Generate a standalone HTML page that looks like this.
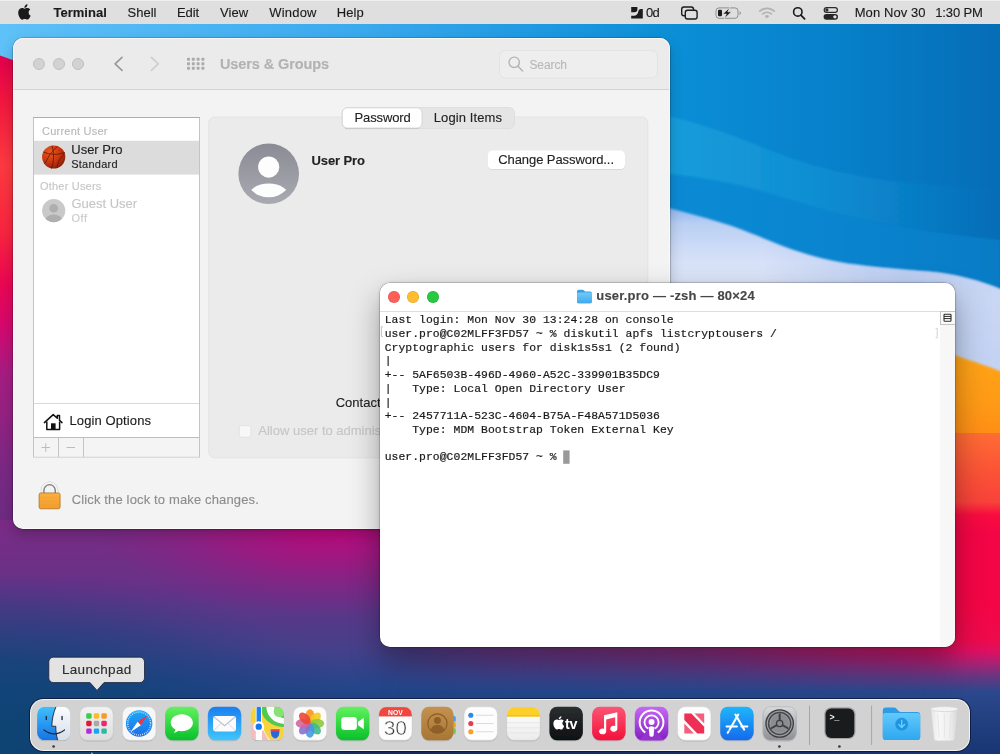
<!DOCTYPE html>
<html lang="en">
<head>
<meta charset="utf-8">
<title>Users &amp; Groups</title>
<style>
*{box-sizing:border-box;margin:0;padding:0}
html,body{width:1000px;height:754px;overflow:hidden;background:#1a2a60}
body{font-family:"Liberation Sans",sans-serif;position:relative;color:#222}
.layer{position:absolute;left:0;top:0;width:1000px;height:754px;overflow:hidden;will-change:transform}
.t{position:absolute;white-space:nowrap;line-height:1;-webkit-text-stroke:.12px currentColor}
.abs{position:absolute}
#wall{position:absolute;left:0;top:0;width:1000px;height:754px}
#menubar{position:absolute;left:0;top:0;width:1000px;height:24px;background:#dfdfdf;border-top:1px solid #efefef}
#prefs{position:absolute;left:13px;top:38px;width:657px;height:491.3px;border-radius:10px;background:#f3f3f3;box-shadow:0 0 0 0.5px rgba(0,0,0,.3),0 6px 14px rgba(0,0,0,.2),0 1px 3px rgba(0,0,0,.15);overflow:hidden}
#prefs:after{content:"";position:absolute;left:0;top:0;right:0;bottom:0;border-radius:10px;box-shadow:inset 0 0 0 1px rgba(255,255,255,.6);pointer-events:none}
#prefs .tb{position:absolute;left:0;top:0;width:100%;height:52px;background:#ebebeb;border-bottom:1px solid #d4d4d4}
.tl{position:absolute;width:12px;height:12px;border-radius:50%}
#prefs .tl{background:#d2d2d2;border:0.5px solid #c0c0c0;top:20px}
#term{position:absolute;left:380px;top:283px;width:575px;height:364px;border-radius:10px;background:#fff;box-shadow:0 0 0 0.5px rgba(0,0,0,.32),0 14px 30px rgba(0,0,0,.34),0 0 5px rgba(0,0,0,.12);overflow:hidden}
#term .tb{position:absolute;left:0;top:0;width:100%;height:28.5px;background:#fff;border-bottom:1px solid #dedede}
#term pre{position:absolute;left:4.7px;top:31.4px;-webkit-text-stroke:.2px #1a1a1a;font-family:"Liberation Mono",monospace;font-size:11.4px;line-height:13.68px;color:#1a1a1a;letter-spacing:0.046px}
#dock{position:absolute;left:30px;top:699.4px;width:939.6px;height:51.6px;border-radius:13.5px;background:#d3d2d3;border:1.4px solid rgba(255,255,255,.72);box-shadow:0 0 0 1px rgba(8,18,48,.72)}
</style>
</head>
<body>
<svg id="wall" width="1000" height="754" viewBox="0 0 1000 754">
<defs>
<linearGradient id="sky" x1="0" y1="0" x2="1" y2="0">
<stop offset="0" stop-color="#5ec1f8"/><stop offset="0.35" stop-color="#3caaee"/><stop offset="0.56" stop-color="#1b97e0"/><stop offset="0.68" stop-color="#0a8ed5"/><stop offset="0.84" stop-color="#0780ca"/><stop offset="1" stop-color="#066db7"/>
</linearGradient>
<linearGradient id="band1" x1="0" y1="0" x2="1" y2="0">
<stop offset="0" stop-color="#1ea3de" stop-opacity=".95"/><stop offset="0.5" stop-color="#1698d8" stop-opacity=".6"/><stop offset="1" stop-color="#0f86cc" stop-opacity="0"/>
</linearGradient>
<linearGradient id="lav" gradientUnits="userSpaceOnUse" x1="0" y1="205" x2="0" y2="360">
<stop offset="0" stop-color="#86b4ee"/><stop offset="0.12" stop-color="#b9cff3"/><stop offset="0.35" stop-color="#d6e1f8"/><stop offset="0.6" stop-color="#e0e6f8"/><stop offset="1" stop-color="#d6dff5"/>
</linearGradient>
<linearGradient id="lavR" gradientUnits="userSpaceOnUse" x1="760" y1="0" x2="1000" y2="0">
<stop offset="0" stop-color="#9fb9ec" stop-opacity="0"/><stop offset="0.6" stop-color="#a5bdee" stop-opacity=".55"/><stop offset="1" stop-color="#b4c8f0" stop-opacity=".5"/>
</linearGradient>
<linearGradient id="org" gradientUnits="userSpaceOnUse" x1="0" y1="350" x2="0" y2="440">
<stop offset="0" stop-color="#ffa514"/><stop offset="0.6" stop-color="#ff9a14"/><stop offset="1" stop-color="#ff8c18"/>
</linearGradient>
<linearGradient id="red" gradientUnits="userSpaceOnUse" x1="0" y1="430" x2="0" y2="754">
<stop offset="0.01" stop-color="#ff6c34"/><stop offset="0.123" stop-color="#fb5436"/><stop offset="0.222" stop-color="#f9423a"/><stop offset="0.262" stop-color="#f80c40"/><stop offset="0.32" stop-color="#f40545"/><stop offset="0.525" stop-color="#f40545"/><stop offset="0.648" stop-color="#ee0a4c"/><stop offset="0.685" stop-color="#dc1062"/><stop offset="0.716" stop-color="#b01f72"/><stop offset="0.759" stop-color="#6a3580"/><stop offset="0.809" stop-color="#2b488c"/><stop offset="1" stop-color="#183672"/>
</linearGradient>
<linearGradient id="leftg" gradientUnits="userSpaceOnUse" x1="0" y1="56" x2="0" y2="600">
<stop offset="0" stop-color="#e2004f"/><stop offset="0.08" stop-color="#f2163f"/><stop offset="0.2" stop-color="#fd3a40"/><stop offset="0.32" stop-color="#f9263f"/><stop offset="0.42" stop-color="#ec0653"/><stop offset="0.5" stop-color="#d3096f"/><stop offset="0.58" stop-color="#a81c82"/><stop offset="0.78" stop-color="#762a84"/><stop offset="1" stop-color="#5b2e7f"/>
</linearGradient>
<linearGradient id="bot" gradientUnits="userSpaceOnUse" x1="0" y1="520" x2="0" y2="754">
<stop offset="0" stop-color="#7c2b86"/><stop offset="0.3" stop-color="#653287"/><stop offset="0.55" stop-color="#46408a"/><stop offset="0.72" stop-color="#23468a"/><stop offset="0.85" stop-color="#193a78"/><stop offset="1" stop-color="#13285c"/>
</linearGradient>
<radialGradient id="mag" cx="0.5" cy="0.5" r="0.5">
<stop offset="0" stop-color="#c6047c" stop-opacity="1"/><stop offset="0.45" stop-color="#a9137f" stop-opacity=".7"/><stop offset="1" stop-color="#8a2085" stop-opacity="0"/>
</radialGradient>
<radialGradient id="pinkr" cx="0.5" cy="0.5" r="0.5">
<stop offset="0" stop-color="#f20a4a" stop-opacity="1"/><stop offset="0.4" stop-color="#d9115f" stop-opacity=".8"/><stop offset="1" stop-color="#8a2080" stop-opacity="0"/>
</radialGradient>
<radialGradient id="navy" cx="0.5" cy="0.5" r="0.5">
<stop offset="0" stop-color="#0d4574" stop-opacity="1"/><stop offset="0.45" stop-color="#114377" stop-opacity=".8"/><stop offset="0.75" stop-color="#1a407c" stop-opacity=".4"/><stop offset="1" stop-color="#2a3f85" stop-opacity="0"/>
</radialGradient>
<linearGradient id="fadeLg" gradientUnits="userSpaceOnUse" x1="380" y1="0" x2="965" y2="0"><stop offset="0" stop-color="#000"/><stop offset="0.2" stop-color="#333"/><stop offset="0.55" stop-color="#686868"/><stop offset="0.87" stop-color="#ccc"/><stop offset="1" stop-color="#fff"/></linearGradient>
<mask id="fadeL" maskUnits="userSpaceOnUse" x="380" y="433" width="620" height="321"><rect x="380" y="433" width="620" height="321" fill="url(#fadeLg)"/></mask>
<filter id="b1" x="-5%" y="-5%" width="110%" height="110%"><feGaussianBlur stdDeviation="0.9"/></filter>
<filter id="b3" x="-5%" y="-20%" width="110%" height="140%"><feGaussianBlur stdDeviation="3"/></filter>
</defs>
<rect width="1000" height="754" fill="url(#sky)"/>
<!-- blue waves -->
<path d="M600,108 C660,110 700,122 767,149 S880,182 1000,190 L1000,240 C900,230 850,218 800,203 S720,176 600,168Z" fill="url(#band1)" filter="url(#b1)"/>
<path d="M600,168 C720,176 760,190 800,203 S900,230 1000,240 L1000,300 L600,300Z" fill="#0d88d3" opacity=".55" filter="url(#b1)"/>
<!-- lavender -->
<path d="M0,150 C300,150 560,180 669,208 C700,216 720,222 732,226 C760,236 780,246 803,253 C830,262 850,264 875,267 C910,271 930,271 947,274 C970,278 985,283 1000,289 L1012,294 L1012,420 L0,420Z" fill="url(#lav)" filter="url(#b1)"/>
<path d="M0,150 C300,150 560,180 669,208 C700,216 720,222 732,226 C760,236 780,246 803,253 C830,262 850,264 875,267 C910,271 930,271 947,274 C970,278 985,283 1000,289 L1012,294 L1012,420 L0,420Z" fill="url(#lavR)" filter="url(#b1)"/>
<!-- orange -->
<path d="M0,250 C400,260 800,300 954,355 C975,362 990,367 1000,371 L1012,375 L1012,470 L0,470Z" fill="url(#org)" filter="url(#b1)"/>
<!-- red -->
<path d="M0,300 C500,380 800,420 954,433 L1000,439 L1012,441 L1012,754 L0,754Z" fill="url(#red)" filter="url(#b1)"/>
<!-- left strip -->
<path d="M0,55.500 L14,60.500 L300,120 L300,600 L0,600Z" fill="url(#leftg)"/>
<!-- bottom -->
<rect x="0" y="520" width="1000" height="234" fill="url(#bot)"/>
<rect x="380" y="433" width="620" height="321" fill="url(#red)" mask="url(#fadeL)"/>
<ellipse cx="330" cy="522" rx="240" ry="95" fill="url(#mag)"/>
<ellipse cx="-20" cy="735" rx="400" ry="165" fill="url(#navy)"/>
</svg>
<div class="layer" id="mb-layer">
<div id="menubar"></div>
<svg class="abs" style="left:0;top:0" width="1000" height="24" viewBox="0 0 1000 24">
<path transform="translate(15.2,2.7) scale(0.77)" fill="#1a1a1a" d="M18.71,19.5C17.88,20.74 17,21.95 15.66,21.97C14.32,22 13.89,21.18 12.37,21.18C10.84,21.18 10.37,21.95 9.1,22C7.79,22.05 6.8,20.68 5.96,19.47C4.25,17 2.94,12.45 4.7,9.39C5.57,7.87 7.13,6.91 8.82,6.88C10.1,6.86 11.32,7.75 12.11,7.75C12.89,7.75 14.37,6.68 15.92,6.84C16.57,6.87 18.39,7.1 19.56,8.82C19.47,8.88 17.39,10.1 17.41,12.63C17.44,15.65 20.06,16.66 20.09,16.67C20.06,16.74 19.67,18.11 18.71,19.5M13,3.5C13.73,2.67 14.94,2.04 15.94,2C16.07,3.17 15.6,4.35 14.9,5.19C14.21,6.04 13.07,6.7 11.95,6.61C11.8,5.46 12.36,4.26 13,3.5Z"/>
<!-- monitor icon -->
<path d="M631.2,7 h6.200 v2.200 q0,3 -3,3 h-3.200z" fill="#1c1c1c"/>
<path d="M631.2,18.500 v-2.800 h2.800 q3.200,0 4.100,-3.400 q.7,-3.300 2.700,-3.300 h2 v9.500z" fill="#1c1c1c"/>
<!-- windows -->
<rect x="681.7" y="7" width="11.8" height="8.8" rx="2.2" fill="none" stroke="#1c1c1c" stroke-width="1.4"/>
<rect x="685.3" y="10.2" width="11.8" height="8.8" rx="2.2" fill="#dfdfdf" stroke="#1c1c1c" stroke-width="1.4"/>
<!-- battery -->
<rect x="716" y="7.9" width="22" height="10.4" rx="3" fill="none" stroke="#8f8f8f" stroke-width="1"/>
<path d="M739.5,11.3 q1.5,0.4 1.5,1.8 q0,1.4 -1.5,1.8z" fill="#9a9a9a"/>
<rect x="718" y="9.700" width="4" height="6.600" rx="1.300" fill="#1c1c1c"/>
<path d="M730,7.200 l-7.400,6.900 h3.700 l-2.100,4.800 l7.300,-7.100 h-3.700z" fill="#1c1c1c" stroke="#dfdfdf" stroke-width=".8"/>
<!-- wifi -->
<g fill="none" stroke="#b3b3b3" stroke-width="1.7" stroke-linecap="round">
<path d="M759.8,11.2 a10.4,10.4 0 0 1 14.4,0"/>
<path d="M762.5,14 a6.6,6.6 0 0 1 9,0"/>
</g>
<path d="M767,18.6 l-2.3,-2.4 a3.3,3.3 0 0 1 4.6,0z" fill="#b3b3b3"/>
<!-- search -->
<circle cx="797.8" cy="11.9" r="4.2" fill="none" stroke="#1c1c1c" stroke-width="1.6"/>
<path d="M800.9,15.1 l3.7,3.7" stroke="#1c1c1c" stroke-width="1.8" stroke-linecap="round"/>
<!-- control center -->
<rect x="824.200" y="7.600" width="13.200" height="4.700" rx="2.350" fill="none" stroke="#2a2a2a" stroke-width="1.200"/>
<circle cx="826.900" cy="9.950" r="1.600" fill="#2a2a2a"/>
<rect x="823.600" y="14" width="14.400" height="5.700" rx="2.850" fill="#262626"/>
<circle cx="834.900" cy="16.850" r="1.700" fill="#dfdfdf"/>
</svg>
<span class="t" style="left:53.40px;top:6.40px;font-size:13px;color:#1a1a1a;font-weight:bold;letter-spacing:0.026px;">Terminal</span><span class="t" style="left:127.50px;top:6.40px;font-size:13px;color:#1a1a1a;">Shell</span><span class="t" style="left:177.00px;top:6.40px;font-size:13px;color:#1a1a1a;letter-spacing:-0.134px;">Edit</span><span class="t" style="left:220.00px;top:6.40px;font-size:13px;color:#1a1a1a;letter-spacing:0.086px;">View</span><span class="t" style="left:269.30px;top:6.40px;font-size:13px;color:#1a1a1a;letter-spacing:0.193px;">Window</span><span class="t" style="left:336.80px;top:6.40px;font-size:13px;color:#1a1a1a;letter-spacing:0.088px;">Help</span><span class="t" style="left:646.00px;top:5.90px;font-size:13px;color:#1a1a1a;letter-spacing:-0.660px;">0d</span><span class="t" style="left:854.70px;top:5.90px;font-size:13px;color:#1a1a1a;letter-spacing:0.090px;">Mon Nov 30</span><span class="t" style="left:935.20px;top:5.90px;font-size:13px;color:#1a1a1a;letter-spacing:-0.119px;">1:30 PM</span>
</div>
<div class="layer" id="prefs-layer">
<div id="prefs">
 <div class="tb">
  <div class="tl" style="left:20px"></div>
  <div class="tl" style="left:39.5px"></div>
  <div class="tl" style="left:59px"></div>
 </div>
</div>
<svg class="abs" style="left:0;top:0" width="1000" height="754" viewBox="0 0 1000 754">
<defs>
<linearGradient id="avg" x1="0" y1="0" x2="0" y2="1"><stop offset="0" stop-color="#8b8b95"/><stop offset="1" stop-color="#a9a9b1"/></linearGradient>
<radialGradient id="bball" cx="0.35" cy="0.3" r="0.8"><stop offset="0" stop-color="#ea5a22"/><stop offset="0.55" stop-color="#c8330f"/><stop offset="1" stop-color="#7e1d06"/></radialGradient>
<linearGradient id="lockg" x1="0" y1="0" x2="0" y2="1"><stop offset="0" stop-color="#fbb040"/><stop offset="1" stop-color="#f29d2a"/></linearGradient>
<clipPath id="avclip"><circle cx="268.7" cy="172.700" r="24.600"/></clipPath>
<clipPath id="gclip"><circle cx="53.7" cy="210.6" r="11.6"/></clipPath>
</defs>
<!-- back / forward chevrons -->
<path d="M122,57.300 l-6.900,6.500 l6.900,6.500" fill="none" stroke="#9a9a9a" stroke-width="1.7" stroke-linecap="round" stroke-linejoin="round"/>
<path d="M151.400,57.300 l6.900,6.500 l-6.900,6.500" fill="none" stroke="#cecece" stroke-width="1.7" stroke-linecap="round" stroke-linejoin="round"/>
<!-- grid -->
<g fill="#ababab">
<rect x="187.0" y="57.7" width="3" height="3" rx=".7"/><rect x="191.8" y="57.7" width="3" height="3" rx=".7"/><rect x="196.6" y="57.7" width="3" height="3" rx=".7"/><rect x="201.4" y="57.7" width="3" height="3" rx=".7"/>
<rect x="187.0" y="62.2" width="3" height="3" rx=".7"/><rect x="191.8" y="62.2" width="3" height="3" rx=".7"/><rect x="196.6" y="62.2" width="3" height="3" rx=".7"/><rect x="201.4" y="62.2" width="3" height="3" rx=".7"/>
<rect x="187.0" y="66.7" width="3" height="3" rx=".7"/><rect x="191.8" y="66.7" width="3" height="3" rx=".7"/><rect x="196.6" y="66.7" width="3" height="3" rx=".7"/><rect x="201.4" y="66.7" width="3" height="3" rx=".7"/>
</g>
<!-- search field -->
<rect x="499.5" y="50.5" width="158" height="27.5" rx="6" fill="#eeeeee" stroke="#e3e3e3" stroke-width="1"/>
<circle cx="514.2" cy="62.3" r="5.2" fill="none" stroke="#b4b4b4" stroke-width="1.4"/>
<path d="M518,66.2 l4.6,4.8" stroke="#b4b4b4" stroke-width="1.5" stroke-linecap="round"/>
<!-- right panel -->
<rect x="208.8" y="117" width="439" height="340.8" rx="6" fill="#ebebeb" stroke="#e3e3e3" stroke-width="1"/>
<!-- tabs -->
<rect x="342" y="107.5" width="172.5" height="21" rx="5.5" fill="#e5e5e5" stroke="#dcdcdc" stroke-width=".8"/>
<rect x="342.3" y="107.8" width="79.7" height="20.2" rx="5" fill="#ffffff" stroke="#d0d0d0" stroke-width=".8"/>
<path d="M345,128.6 h74" stroke="#c4c4c4" stroke-width=".8"/>
<!-- change password button -->
<rect x="487.6" y="151.1" width="137.4" height="18.8" rx="4.8" fill="#000" opacity=".12"/>
<rect x="487.6" y="150.5" width="137.4" height="18.8" rx="4.8" fill="#ffffff"/>
<!-- big avatar -->
<circle cx="268.7" cy="173.8" r="30.3" fill="url(#avg)"/>
<g clip-path="url(#avclip)" fill="#fdfdfd"><circle cx="268.7" cy="167.100" r="10.6"/><ellipse cx="268.7" cy="197.800" rx="21" ry="14.3"/></g>
<!-- sidebar -->
<rect x="33.5" y="117.5" width="166" height="339.5" fill="#ffffff" stroke="#c4c4c4" stroke-width="1"/>
<path d="M33,117.5 h167" stroke="#aeaeae" stroke-width="1"/>
<rect x="34" y="140.8" width="165" height="33.8" fill="#dcdcdc"/>
<!-- basketball -->
<circle cx="53.7" cy="157" r="11.6" fill="url(#bball)"/>
<g fill="none" stroke="#5a1606" stroke-width=".9" opacity=".85">
<path d="M43.5,152 q10,4.5 21.5,0.5"/><path d="M52,145.6 q3.5,11.5 -0.5,22.9"/><path d="M44.8,163.5 q4,-9.5 12.5,-17.3"/><path d="M57,168 q1,-9 7.7,-14.5"/>
</g>
<!-- guest -->
<circle cx="53.7" cy="210.6" r="11.6" fill="#c9c9c9"/>
<g clip-path="url(#gclip)" fill="#aeaeae"><circle cx="53.7" cy="208.3" r="4.3"/><ellipse cx="53.7" cy="220.6" rx="8.6" ry="6"/></g>
<!-- login options row -->
<path d="M34,403.5 h165" stroke="#d9d9d9" stroke-width="1"/>
<path d="M34,437.5 h165" stroke="#bdbdbd" stroke-width="1"/>
<rect x="34" y="438" width="165" height="18.5" fill="#f4f4f4"/>
<path d="M58.5,438 v19 M83.5,438 v19" stroke="#c4c4c4" stroke-width="1"/>
<path d="M41.5,447.5 h8.5 M45.75,443.3 v8.5 M66.5,447.5 h8.5" stroke="#bcbcbc" stroke-width="1"/>
<!-- house -->
<path d="M44.4,422.6 L53.2,414.6 L57.3,418.3 V415.6 H59.5 V420.3 L62,422.6" fill="none" stroke="#111" stroke-width="1.5" stroke-linejoin="round" stroke-linecap="round"/>
<path d="M46.8,421.6 V429.4 H59.6 V421.6" fill="none" stroke="#111" stroke-width="1.5" stroke-linejoin="round"/>
<rect x="51" y="423.3" width="4.6" height="6.1" fill="#111"/>
<!-- checkbox -->
<rect x="239.2" y="425.6" width="11.8" height="11.6" rx="2.6" fill="#f7f7f7" stroke="#dedede" stroke-width=".8"/>
<!-- lock -->
<path d="M42.600,494 v-3.600 a7,7 0 0 1 14,0 v3.600" fill="none" stroke="#c9c9c9" stroke-width="3.600"/>
<path d="M42.600,494 v-3.600 a7,7 0 0 1 14,0 v3.600" fill="none" stroke="#f4f4f4" stroke-width="2.600"/>
<path d="M43.900,494 v-3.600 a5.700,5.700 0 0 1 11.400,0 v3.600" fill="none" stroke="#7e7e7e" stroke-width="1.300"/>
<rect x="39.100" y="492.900" width="21" height="15.900" rx="1.800" fill="url(#lockg)" stroke="#a9650f" stroke-width=".7"/>
<path d="M40,497.200 h19.200 M40,501 h19.200 M40,504.800 h19.200" stroke="#e8962a" stroke-width=".5" opacity=".7"/>
</svg>
<span class="t" style="left:220.00px;top:56.93px;font-size:14.5px;color:#b2b2b2;font-weight:bold;letter-spacing:-0.107px;">Users &amp; Groups</span><span class="t" style="left:529.40px;top:58.84px;font-size:12px;color:#b9b9b9;letter-spacing:-0.084px;">Search</span><span class="t" style="left:354.50px;top:110.90px;font-size:13px;color:#222;letter-spacing:-0.118px;">Password</span><span class="t" style="left:433.75px;top:110.90px;font-size:13px;color:#222;letter-spacing:0.105px;">Login Items</span><span class="t" style="left:42.00px;top:125.59px;font-size:11px;color:#b8b8b8;letter-spacing:0.231px;">Current User</span><span class="t" style="left:71.25px;top:143.30px;font-size:13px;color:#222;letter-spacing:-0.006px;">User Pro</span><span class="t" style="left:71.25px;top:159.29px;font-size:11px;color:#222;letter-spacing:0.229px;">Standard</span><span class="t" style="left:40.00px;top:180.59px;font-size:11px;color:#c6c6c6;letter-spacing:0.196px;">Other Users</span><span class="t" style="left:71.50px;top:197.00px;font-size:13px;color:#c6c6c6;letter-spacing:-0.027px;">Guest User</span><span class="t" style="left:71.50px;top:213.29px;font-size:11px;color:#cacaca;letter-spacing:0.515px;">Off</span><span class="t" style="left:311.50px;top:154.00px;font-size:13px;color:#222;font-weight:bold;letter-spacing:-0.099px;">User Pro</span><span class="t" style="left:498.25px;top:152.90px;font-size:13px;color:#222;letter-spacing:-0.077px;">Change Password...</span><span class="t" style="left:335.70px;top:396.40px;font-size:13px;color:#222;">Contacts Card:</span><span class="t" style="left:258.30px;top:424.00px;font-size:13px;color:#c6c6c6;">Allow user to administer this computer</span><span class="t" style="left:69.50px;top:414.00px;font-size:13px;color:#1a1a1a;letter-spacing:0.107px;">Login Options</span><span class="t" style="left:71.75px;top:492.90px;font-size:13px;color:#8c8c8c;letter-spacing:0.140px;">Click the lock to make changes.</span>
</div>
<div class="layer" id="term-layer">
<div id="term">
 <div class="tb">
  <div class="tl" style="left:8px;top:8px;background:#fe5f57;box-shadow:inset 0 0 0 .5px rgba(0,0,0,.15)"></div>
  <div class="tl" style="left:27.3px;top:8px;background:#febc2e;box-shadow:inset 0 0 0 .5px rgba(0,0,0,.15)"></div>
  <div class="tl" style="left:47px;top:8px;background:#28c840;box-shadow:inset 0 0 0 .5px rgba(0,0,0,.15)"></div>
 </div>
<div class="abs" style="left:560px;top:29px;width:15px;height:340px;background:#f7f7f7"></div><div class="abs" style="left:559.6px;top:28.4px;width:16px;height:13.8px;background:#fafafa;border:.8px solid #c4c4c4"></div>
<pre>Last login: Mon Nov 30 13:24:28 on console
user.pro@C02MLFF3FD57 ~ % diskutil apfs listcryptousers /
Cryptographic users for disk1s5s1 (2 found)
|
+-- 5AF6503B-496D-4960-A52C-339901B35DC9
|   Type: Local Open Directory User
|
+-- 2457711A-523C-4604-B75A-F48A571D5036
    Type: MDM Bootstrap Token External Key

user.pro@C02MLFF3FD57 ~ % </pre>
</div>
<svg class="abs" style="left:0;top:0" width="1000" height="754" viewBox="0 0 1000 754">
<defs><linearGradient id="fold" x1="0" y1="0" x2="0" y2="1"><stop offset="0" stop-color="#6fcbf8"/><stop offset="1" stop-color="#3fa9ec"/></linearGradient></defs>
<!-- folder icon -->
<path d="M577,291.3 q0,-1.6 1.6,-1.6 h3.8 q1,0 1.7,.8 l.9,1 h5.2 q1.6,0 1.6,1.6 v8.6 q0,1.6 -1.6,1.6 h-11.6 q-1.6,0 -1.6,-1.6z" fill="#3aa0e6"/>
<rect x="577" y="292.6" width="14.8" height="10.7" rx="1.5" fill="url(#fold)"/>
<!-- cursor -->
<rect x="563.2" y="450.4" width="6.4" height="13.4" fill="#9a9a9a"/>
<!-- scroll column -->
<rect x="944" y="314.3" width="7" height="7" rx=".8" fill="#fff" stroke="#2a2a2a" stroke-width="1.1"/>
<path d="M944,316.4 h7 M944,318.6 h7" stroke="#2a2a2a" stroke-width="1"/>
<!-- brackets -->
<path d="M383,326.8 h-1.6 v9.6 h1.6" fill="none" stroke="#b5b5b5" stroke-width=".8"/>
<path d="M935.6,328.4 h1.6 v9.4 h-1.6" fill="none" stroke="#c6c6c6" stroke-width=".8"/>
</svg>
<span class="t" style="left:596.30px;top:289.30px;font-size:13px;color:#464646;font-weight:bold;letter-spacing:0.188px;">user.pro — -zsh — 80×24</span>
</div>
<div class="layer" id="dock-layer">
<div id="dock"></div>
<svg class="abs" style="left:0;top:0" width="1000" height="754" viewBox="0 0 1000 754">
<defs>
<linearGradient id="gFinL" x1="0" y1="0" x2="0" y2="1"><stop offset="0" stop-color="#3fc0fb"/><stop offset="1" stop-color="#1673e6"/></linearGradient>
<linearGradient id="gFinR" x1="0" y1="0" x2="0" y2="1"><stop offset="0" stop-color="#fafcff"/><stop offset="1" stop-color="#d7dfea"/></linearGradient>
<linearGradient id="gLp" x1="0" y1="0" x2="0" y2="1"><stop offset="0" stop-color="#f3f3f3"/><stop offset="1" stop-color="#dddddd"/></linearGradient>
<linearGradient id="gSaf" x1="0" y1="0" x2="0" y2="1"><stop offset="0" stop-color="#19a9fb"/><stop offset="1" stop-color="#1d6fe8"/></linearGradient>
<linearGradient id="gMsg" x1="0" y1="0" x2="0" y2="1"><stop offset="0" stop-color="#62f15e"/><stop offset="1" stop-color="#09c02a"/></linearGradient>
<linearGradient id="gMail" x1="0" y1="0" x2="0" y2="1"><stop offset="0" stop-color="#1a7ff0"/><stop offset="1" stop-color="#3fc6fc"/></linearGradient>
<linearGradient id="gMus" x1="0" y1="0" x2="0" y2="1"><stop offset="0" stop-color="#fc5573"/><stop offset="1" stop-color="#f2123c"/></linearGradient>
<linearGradient id="gPod" x1="0" y1="0" x2="0" y2="1"><stop offset="0" stop-color="#c768f3"/><stop offset="1" stop-color="#8420c4"/></linearGradient>
<linearGradient id="gApp" x1="0" y1="0" x2="0" y2="1"><stop offset="0" stop-color="#1cb6fb"/><stop offset="1" stop-color="#166aec"/></linearGradient>
<linearGradient id="gTv" x1="0" y1="0" x2="0" y2="1"><stop offset="0" stop-color="#2a2f30"/><stop offset="1" stop-color="#0e1011"/></linearGradient>
<linearGradient id="gCon" x1="0" y1="0" x2="0" y2="1"><stop offset="0" stop-color="#c4914f"/><stop offset="1" stop-color="#a87634"/></linearGradient>
<linearGradient id="gNote" x1="0" y1="0" x2="0" y2="1"><stop offset="0" stop-color="#ffffff"/><stop offset="1" stop-color="#ececec"/></linearGradient>
<linearGradient id="gSys" x1="0" y1="0" x2="0" y2="1"><stop offset="0" stop-color="#d9dadd"/><stop offset="1" stop-color="#8e8f93"/></linearGradient>
<linearGradient id="gDl" x1="0" y1="0" x2="0" y2="1"><stop offset="0" stop-color="#62c9fb"/><stop offset="1" stop-color="#2ea7f0"/></linearGradient>
<linearGradient id="gTr" x1="0" y1="0" x2="1" y2="0"><stop offset="0" stop-color="#e6e6e6"/><stop offset="0.3" stop-color="#fafafa"/><stop offset="0.7" stop-color="#f0f0f0"/><stop offset="1" stop-color="#d6d6d6"/></linearGradient>
<filter id="ish" x="-20%" y="-20%" width="140%" height="150%"><feDropShadow dx="0" dy=".7" stdDeviation=".7" flood-color="#000" flood-opacity=".22"/></filter>
<clipPath id="icl"><rect x="0" y="0" width="32.6" height="32.6" rx="7.4"/></clipPath>
</defs>
<g transform="translate(37.05,706.8) scale(1.0245)" filter="url(#ish)"><g clip-path="url(#icl)"><rect width="32.6" height="32.6" fill="url(#gFinR)"/>
<path d="M0,0 H18.500 C16,5.500 14.600,12 14.400,19 H18.300 C18.2,23.5 18.8,28.4 20.2,32.6 H0Z" fill="url(#gFinL)"/>
<path d="M18.500,0 C16,5.500 14.600,12 14.400,19 H18.300 C18.2,23.5 18.8,28.4 20.2,32.6" fill="none" stroke="#1d2a3c" stroke-width=".9"/>
<path d="M6.800,22.600 Q16.700,30.200 26.800,22.600" fill="none" stroke="#1d2a3c" stroke-width="1.15" stroke-linecap="round"/>
<path d="M9,9.500 v3 M24.400,9.500 v3" stroke="#1d2a3c" stroke-width="1.3" stroke-linecap="round"/></g></g>
<g transform="translate(79.75,706.8) scale(1.0245)" filter="url(#ish)"><rect x="0" y="0" width="32.6" height="32.6" rx="7.4" fill="url(#gLp)" stroke="#cfcfcf" stroke-width=".5"/><rect x="6.3" y="6.3" width="5.3" height="5.3" rx="1.4" fill="#3ecb4c"/><rect x="13.7" y="6.3" width="5.3" height="5.3" rx="1.4" fill="#fdbb2c"/><rect x="21.1" y="6.3" width="5.3" height="5.3" rx="1.4" fill="#f59b25"/><rect x="6.3" y="13.7" width="5.3" height="5.3" rx="1.4" fill="#df1f38"/><rect x="13.7" y="13.7" width="5.3" height="5.3" rx="1.4" fill="#a9a9a9"/><rect x="21.1" y="13.7" width="5.3" height="5.3" rx="1.4" fill="#ec2b6b"/><rect x="6.3" y="21.1" width="5.3" height="5.3" rx="1.4" fill="#b52cd9"/><rect x="13.7" y="21.1" width="5.3" height="5.3" rx="1.4" fill="#18a7f1"/><rect x="21.1" y="21.1" width="5.3" height="5.3" rx="1.4" fill="#2db9a1"/></g>
<g transform="translate(122.45,706.8) scale(1.0245)" filter="url(#ish)"><rect x="0" y="0" width="32.6" height="32.6" rx="7.4" fill="#f7f7f7" stroke="#d6d6d6" stroke-width=".5"/><circle cx="16.3" cy="16.3" r="12.9" fill="url(#gSaf)"/>
<circle cx="16.3" cy="16.3" r="11.2" fill="none" stroke="#ffffff" stroke-width="1.5" stroke-dasharray=".7 1.26" opacity=".9"/>
<path d="M24.6,8 L14.7,14.7 L17.9,17.9Z" fill="#f0364a"/><path d="M8,24.6 L14.7,14.7 L17.9,17.9Z" fill="#ffffff"/></g>
<g transform="translate(165.15,706.8) scale(1.0245)" filter="url(#ish)"><rect x="0" y="0" width="32.6" height="32.6" rx="7.4" fill="url(#gMsg)" /><path d="M16.3,7.2 c6.2,0 10.8,3.7 10.8,8.3 s-4.6,8.3 -10.8,8.3 c-1.3,0 -2.5,-.15 -3.6,-.45 c-1,.9 -2.5,1.7 -4.3,1.9 c.9,-.9 1.5,-2 1.6,-3.2 C7.2,20.500 5.500,18.2 5.500,15.500 c0,-4.600 4.600,-8.300 10.800,-8.300z" fill="#ffffff"/></g>
<g transform="translate(207.85,706.8) scale(1.0245)" filter="url(#ish)"><rect x="0" y="0" width="32.6" height="32.6" rx="7.4" fill="url(#gMail)" /><rect x="5.100" y="8.900" width="22.400" height="15.200" rx="2.400" fill="#fbfbfb"/>
<path d="M5.900,9.900 L16.300,18.500 L26.700,9.900" fill="none" stroke="#b9bec6" stroke-width="1"/>
<path d="M6.300,22.800 L13,16 M26.300,22.800 L19.600,16" stroke="#cdd1d8" stroke-width=".8"/></g>
<g transform="translate(250.55,706.8) scale(1.0245)" filter="url(#ish)"><g clip-path="url(#icl)"><rect width="32.6" height="32.6" fill="#f4efe8"/>
<rect x="0" y="0" width="5.200" height="16" fill="#f7d33a"/><rect x="0" y="16" width="5.200" height="17" fill="#f5bcbf"/>
<path d="M11.200,0 H32.6 V32.6 H19.500 C15.500,28 11.800,22 11.200,14Z" fill="#f8d43a"/>
<path d="M11.200,0 H32.6 V19.800 C23,19.500 13.300,14 11.200,6Z" fill="#4fc94f"/>
<path d="M15.400,0 C15.600,9 22.600,16.200 32.6,16.700 V11 C27.600,10.700 23.500,6 23.300,0Z" fill="#fbfbfb"/>
<circle cx="28.100" cy="4.500" r="5.500" fill="#86e274"/>
<path d="M11.200,32.6 V21 L17.500,32.6Z" fill="#f5bcbf"/>
<rect x="5.200" y="0" width="6" height="32.6" fill="#fdfdfd"/>
<rect x="5.900" y="0" width="4.300" height="15.500" rx="1" fill="#1b84f2"/>
<circle cx="8" cy="19.400" r="5.300" fill="#ffffff"/><circle cx="8" cy="19.400" r="3.100" fill="#1878ee"/>
<path d="M19.700,21.800 h8.600 q.7,4 -.5,6.600 q-1.600,2.400 -3.800,3 q-2.200,-.6 -3.800,-3 q-1.200,-2.600 -.5,-6.600z" fill="#2a66d8" stroke="#f4efe8" stroke-width=".5"/>
<path d="M19.700,21.800 h8.600 l.15,2.100 h-8.900z" fill="#e8484a"/>
</g></g>
<g transform="translate(293.25,706.8) scale(1.0245)" filter="url(#ish)"><rect x="0" y="0" width="32.6" height="32.6" rx="7.4" fill="#fbfbfb" stroke="#d9d9d9" stroke-width=".5"/><ellipse cx="16.300" cy="9.300" rx="4.400" ry="6.900" fill="#f8981d" opacity=".9" transform="rotate(0 16.300 16.300)"/><ellipse cx="16.300" cy="9.300" rx="4.400" ry="6.900" fill="#f2cb1c" opacity=".9" transform="rotate(45 16.300 16.300)"/><ellipse cx="16.300" cy="9.300" rx="4.400" ry="6.900" fill="#8fc93a" opacity=".9" transform="rotate(90 16.300 16.300)"/><ellipse cx="16.300" cy="9.300" rx="4.400" ry="6.900" fill="#3fba86" opacity=".9" transform="rotate(135 16.300 16.300)"/><ellipse cx="16.300" cy="9.300" rx="4.400" ry="6.900" fill="#3f9be3" opacity=".9" transform="rotate(180 16.300 16.300)"/><ellipse cx="16.300" cy="9.300" rx="4.400" ry="6.900" fill="#8a6fd0" opacity=".9" transform="rotate(225 16.300 16.300)"/><ellipse cx="16.300" cy="9.300" rx="4.400" ry="6.900" fill="#d2669f" opacity=".9" transform="rotate(270 16.300 16.300)"/><ellipse cx="16.300" cy="9.300" rx="4.400" ry="6.900" fill="#ee4637" opacity=".9" transform="rotate(315 16.300 16.300)"/></g>
<g transform="translate(335.95,706.8) scale(1.0245)" filter="url(#ish)"><rect x="0" y="0" width="32.6" height="32.6" rx="7.4" fill="url(#gMsg)" /><rect x="5.200" y="10" width="15.200" height="12.600" rx="3.200" fill="#ffffff"/><path d="M21.600,14.600 L27.200,10.800 V21.800 L21.600,18z" fill="#ffffff"/></g>
<g transform="translate(378.65,706.8) scale(1.0245)" filter="url(#ish)"><g clip-path="url(#icl)"><rect width="32.6" height="32.6" fill="#fdfdfd"/><rect width="32.6" height="9.400" fill="#f2453d"/></g>
<rect x="0" y="0" width="32.6" height="32.6" rx="7.4" fill="none" stroke="#d4d4d4" stroke-width=".5"/>
<text x="16.300" y="7.700" font-family="Liberation Sans, sans-serif" font-weight="bold" font-size="6.600" fill="#ffffff" text-anchor="middle">NOV</text>
<text x="16.300" y="27.600" font-family="Liberation Sans, sans-serif" font-size="20.500" fill="#333333" stroke="#fdfdfd" stroke-width=".55" text-anchor="middle" letter-spacing="-.2">30</text></g>
<g transform="translate(421.35,706.8) scale(1.0245)" filter="url(#ish)"><rect x="27" y="9" width="6.600" height="5.400" rx="1.500" fill="#4aa3ea"/><rect x="27" y="14.800" width="6.600" height="5.400" rx="1.500" fill="#f0a23a"/><rect x="27" y="20.600" width="6.600" height="5.400" rx="1.500" fill="#7bc65a"/>
<rect x="0" y="0" width="31.400" height="32.6" rx="7.4" fill="url(#gCon)"/>
<circle cx="15.700" cy="16.300" r="9.400" fill="none" stroke="#8a5a26" stroke-width="1.100"/>
<circle cx="15.700" cy="13.300" r="3.400" fill="#8f5f2a"/><path d="M9.200,22.600 q1,-4.800 6.500,-4.800 t6.500,4.800 q-2.800,3 -6.500,3 t-6.500,-3z" fill="#8f5f2a"/></g>
<g transform="translate(464.05,706.8) scale(1.0245)" filter="url(#ish)"><rect x="0" y="0" width="32.6" height="32.6" rx="7.4" fill="#fdfdfd" stroke="#d4d4d4" stroke-width=".5"/><circle cx="6.600" cy="8.300" r="2.500" fill="#2a8af0"/><circle cx="6.600" cy="16.300" r="2.500" fill="#ea3b52"/><circle cx="6.600" cy="24.300" r="2.500" fill="#f5a02a"/>
<path d="M11.500,8.300 H29 M11.500,16.300 H29 M11.500,24.300 H29" stroke="#dcdcdc" stroke-width="1"/></g>
<g transform="translate(506.75,706.8) scale(1.0245)" filter="url(#ish)"><g clip-path="url(#icl)"><rect width="32.6" height="32.6" fill="url(#gNote)"/><rect width="32.6" height="9.200" fill="#fccf2a"/><rect y="8" width="32.6" height="1.600" fill="#f3c11a"/>
<path d="M0,15.500 H32.6 M0,20.500 H32.6 M0,25.500 H32.6" stroke="#e1e1e1" stroke-width=".7"/></g><rect x="0" y="0" width="32.6" height="32.6" rx="7.4" fill="none" stroke="#d4d4d4" stroke-width=".5"/></g>
<g transform="translate(549.45,706.8) scale(1.0245)" filter="url(#ish)"><rect x="0" y="0" width="32.6" height="32.6" rx="7.4" fill="url(#gTv)" /><path transform="translate(1.300,7.900) scale(0.65)" fill="#ffffff" d="M18.71,19.5C17.88,20.74 17,21.95 15.66,21.97C14.32,22 13.89,21.18 12.37,21.18C10.84,21.18 10.37,21.95 9.1,22C7.79,22.05 6.8,20.68 5.96,19.47C4.25,17 2.94,12.45 4.7,9.39C5.57,7.87 7.13,6.91 8.82,6.880C10.100,6.860 11.320,7.750 12.110,7.750C12.890,7.750 14.370,6.680 15.920,6.840C16.570,6.870 18.390,7.100 19.560,8.820C19.470,8.880 17.390,10.100 17.410,12.630C17.440,15.650 20.060,16.660 20.090,16.670C20.060,16.740 19.670,18.110 18.710,19.500M13,3.500C13.730,2.670 14.940,2.040 15.940,2C16.070,3.170 15.600,4.350 14.900,5.190C14.210,6.040 13.070,6.700 11.950,6.610C11.800,5.460 12.360,4.260 13,3.500Z"/>
<text x="15.100" y="21.200" font-family="Liberation Sans, sans-serif" font-weight="bold" font-size="14" fill="#ffffff" letter-spacing="-.2">tv</text></g>
<g transform="translate(592.15,706.8) scale(1.0245)" filter="url(#ish)"><rect x="0" y="0" width="32.6" height="32.6" rx="7.4" fill="url(#gMus)" /><path d="M11.600,8.300 L24.600,5.300 V21.400 a3.500,2.900 0 1 1 -2.100,-2.650 V10.300 L13.700,12.300 V24 a3.500,2.900 0 1 1 -2.100,-2.650z" fill="#ffffff"/></g>
<g transform="translate(634.85,706.8) scale(1.0245)" filter="url(#ish)"><rect x="0" y="0" width="32.6" height="32.6" rx="7.4" fill="url(#gPod)" /><circle cx="16.300" cy="15.200" r="11.600" fill="none" stroke="#ffffff" stroke-width="1.900"/>
<circle cx="16.300" cy="15.200" r="6.900" fill="none" stroke="#ffffff" stroke-width="1.800"/>
<path d="M16.300,17 L4.500,32.600 H28.100Z" fill="#9632d0"/>
<circle cx="16.300" cy="14.800" r="2.900" fill="#ffffff"/>
<path d="M13.500,20.800 q0,-1.900 2.800,-1.900 t2.800,1.900 l-.8,7 q-.2,1.500 -2,1.500 t-2,-1.500z" fill="#ffffff"/></g>
<g transform="translate(677.55,706.8) scale(1.0245)" filter="url(#ish)"><rect x="0" y="0" width="32.6" height="32.6" rx="7.4" fill="#fdfdfd" stroke="#d8d8d8" stroke-width=".5"/><g><path d="M6.600,6.600 H13.500 L26,19.500 V26 H19.300 L6.600,13z" fill="#ee2f55"/>
<path d="M6.600,16.200 L16,26 H6.600z" fill="#f2607e"/><path d="M16.600,6.600 H26 V16.400z" fill="#f2607e"/>
<path d="M6.600,9 L23.500,26 M9,6.600 L26,23.800" stroke="#fdfdfd" stroke-width="0"/></g></g>
<g transform="translate(720.25,706.8) scale(1.0245)" filter="url(#ish)"><rect x="0" y="0" width="32.6" height="32.6" rx="7.4" fill="url(#gApp)" /><g fill="none" stroke="#ffffff" stroke-width="2.050" stroke-linecap="round"><path d="M17.600,7.600 L9.200,22.200"/><path d="M14.800,7.600 L23.300,22.200"/><path d="M6.200,19.300 H16.200 M20.700,19.300 H26.400"/><path d="M8.200,23.900 L7.300,25.400"/></g></g>
<g transform="translate(762.95,706.8) scale(1.0245)" filter="url(#ish)"><rect x="0" y="0" width="32.6" height="32.6" rx="7.4" fill="url(#gSys)" stroke="#a9aaae" stroke-width=".5"/><circle cx="16.300" cy="16.300" r="14" fill="#3c3d41"/><circle cx="16.300" cy="16.300" r="12.700" fill="#9d9ea2"/><circle cx="16.300" cy="16.300" r="11.500" fill="#47484c"/>
<circle cx="16.300" cy="16.300" r="9.600" fill="#8b8c90" stroke="#a9aaae" stroke-width=".8"/>
<g stroke="#3c3d41" stroke-width="1.900"><path d="M16.300,16.300 V6.500 M16.300,16.300 L7.800,21.200 M16.300,16.300 L24.800,21.200"/></g>
<circle cx="16.300" cy="16.300" r="3.100" fill="#8b8c90" stroke="#3c3d41" stroke-width="1.300"/></g>
<path d="M809.5,705.500 V745 M871.600,705.500 V745" stroke="#a6a6a8" stroke-width="1"/>
<g transform="translate(824.300,707.200)"><rect x="0" y="0" width="31.200" height="31.900" rx="7" fill="#a2a2a5"/><rect x="1.200" y="1.200" width="28.800" height="29.500" rx="5.900" fill="#1a1b1d"/>
<text x="5.200" y="12.700" font-family="Liberation Mono, monospace" font-weight="bold" font-size="8.600" fill="#f4f4f4" letter-spacing="-.5">&gt;_</text></g>
<g transform="translate(882.800,707.600)"><path d="M0,3 q0,-3 3,-3 h8.200 q1.500,0 2.500,1.100 l2.100,2.300 q.9,1 2.400,1 h16.200 q3,0 3,3 v22 q0,3 -3,3 h-31.400 q-3,0 -3,-3z" fill="#2c9ce7"/>
<path d="M0,8.400 q0,-2.900 2.900,-2.900 h31.600 q2.900,0 2.900,2.900 v21.100 q0,2.900 -2.900,2.900 h-31.600 q-2.900,0 -2.900,-2.900z" fill="url(#gDl)"/>
<circle cx="18.900" cy="16.600" r="6.400" fill="#1f95e1"/><path d="M18.900,12.700 v6.900 M16,16.900 l2.900,2.900 l2.900,-2.900" fill="none" stroke="#6cd0fc" stroke-width="1.350" stroke-linecap="round" stroke-linejoin="round"/></g>
<g transform="translate(930,706.200)" opacity=".97"><path d="M.700,2.900 H28 L24.900,32.700 q-.3,2 -2.300,2 H6.100 q-2,0 -2.300,-2z" fill="url(#gTr)" stroke="#cfcfd2" stroke-width=".6"/>
<ellipse cx="14.350" cy="2.900" rx="13.700" ry="2.500" fill="#f6f6f7" stroke="#d2d2d5" stroke-width=".7"/>
<path d="M7.800,7.500 L9.300,31.500 M14.350,7.500 V31.500 M20.900,7.500 L19.400,31.500" stroke="#e2e2e4" stroke-width=".8"/></g>
<circle cx="53.6" cy="746.500" r="1.350" fill="#3a3a3a"/>
<circle cx="779.4" cy="746.500" r="1.350" fill="#3a3a3a"/>
<circle cx="839.4" cy="746.500" r="1.350" fill="#3a3a3a"/>
</svg>
<svg class="abs" style="left:0;top:0" width="1000" height="754" viewBox="0 0 1000 754">
<path d="M53.500,657.200 h86.300 a4.700,4.700 0 0 1 4.700,4.700 v16 a4.700,4.700 0 0 1 -4.700,4.700 h-35.800 l-7,7.800 l-7,-7.800 h-36.500 a4.700,4.700 0 0 1 -4.700,-4.700 v-16 a4.700,4.700 0 0 1 4.700,-4.700z" fill="#e3e3e3" stroke="#1c2238" stroke-width=".8"/>
<path d="M91.200,751.400 V755 H94.200Z" fill="#ffffff" stroke="#111" stroke-width=".5"/>
</svg>
<span class="t" style="left:62.00px;top:663.07px;font-size:13.5px;color:#2a2a2a;letter-spacing:0.304px;">Launchpad</span>
</div>
</body>
</html>
